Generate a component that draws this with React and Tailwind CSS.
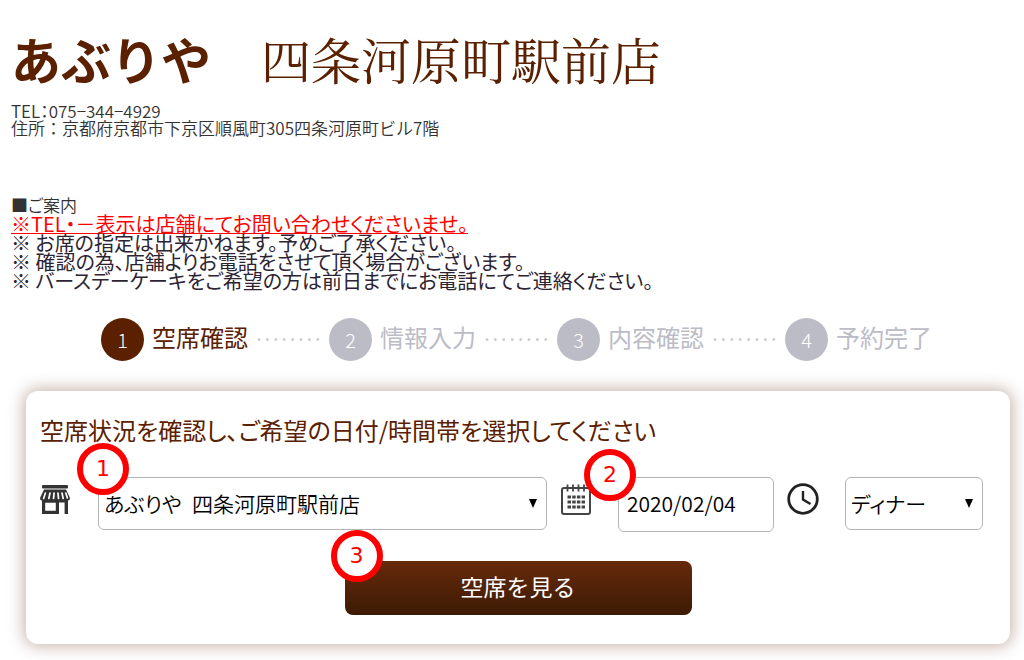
import { useState } from "react";

const notes = [
  "※ お席の指定は出来かねます。予めご了承ください。",
  "※ 確認の為、店舗よりお電話をさせて頂く場合がございます。",
  "※ バースデーケーキをご希望の方は前日までにお電話にてご連絡ください。",
];

const steps = ["空席確認", "情報入力", "内容確認", "予約完了"];

function StoreIcon() {
  return (
    <svg viewBox="0 0 30 30" className="h-[30px] w-[30px]" fill="#333">
      <rect x="2" y="0" width="26" height="3.4" rx="1" />
      <path d="M4 4.600h22L30 13q0 2.500-2 2.500H2Q0 15.500 0 13z" />
      <path
        d="M5.400 8L3.600 13.500M10 8L8.800 13.500M14 8L13.600 13.500M18 8L18.500 13.500M22 8L23.200 13.500M25.800 8L27.400 13"
        fill="none"
        stroke="#fff"
        strokeWidth="1.700"
        strokeLinecap="round"
      />
      <path
        fillRule="evenodd"
        d="M2 15h26v14h-3.400V17.400H19V29H2zM5.200 17.800v8h10.600v-8z"
      />
    </svg>
  );
}

function CalendarIcon() {
  return (
    <svg viewBox="0 0 32 32" className="h-8 w-8" fill="none" stroke="#444">
      <rect x="2" y="5" width="28" height="26" rx="2" strokeWidth="2" />
      <path d="M7.5 1.500v7M13 1.500v7M18.5 1.500v7M24 1.500v7" strokeWidth="1.8" />
      <path
        d="M7.500 14h17.500M7.500 19h17.500M7.500 24h17.500"
        strokeWidth="3"
        strokeDasharray="3.500 1.200"
      />
    </svg>
  );
}

function ClockIcon() {
  return (
    <svg viewBox="0 0 32 32" className="h-8 w-8" fill="none" stroke="#222">
      <circle cx="16" cy="16" r="14.3" strokeWidth="2.8" />
      <path d="M16 8v8.5l7.5 4.5" strokeWidth="2.4" />
    </svg>
  );
}

function Badge({ n, className }) {
  return (
    <span
      className={`absolute z-10 flex h-[52px] w-[52px] items-center justify-center rounded-full border-[6px] border-[#f00] bg-white font-['DejaVu_Sans',sans-serif] text-[22px] leading-none text-[#f00] ${className}`}
    >
      {n}
    </span>
  );
}

function Select({ id, label, options }) {
  return (
    <>
      <select
        id={id}
        aria-label={label}
        className="h-[53px] w-full appearance-none rounded-md border border-[#b4b4b4] bg-white pr-8 pl-[5px] text-[21px] font-[350] text-black [font-feature-settings:'palt']"
      >
        {options.map((o) => (
          <option key={o}>{o}</option>
        ))}
      </select>
      <svg
        viewBox="0 0 8 9"
        className="pointer-events-none absolute top-[22px] right-[10px] h-[9px] w-2"
      >
        <path d="M0 0h8L4 9z" fill="#000" />
      </svg>
    </>
  );
}

export default function App() {
  const [date, setDate] = useState("2020/02/04");

  return (
    <main className="bg-white px-[11px] pt-[26px] pb-4 font-['Noto_Sans_CJK_JP',sans-serif] text-[#333]">
      <h1 className="text-[50px] leading-[64px] whitespace-nowrap text-[#5a2000]">
        <span className="font-bold">あぶりや</span>
        <span className="font-['Noto_Serif_CJK_JP','Noto_Sans_CJK_JP',serif] font-normal">
          {"　四条河原町駅前店"}
        </span>
      </h1>

      <address className="mt-3 text-[17px] leading-[17px] font-[350] not-italic">
        <p className="[font-feature-settings:'palt']">TEL：075−344−4929</p>
        <p>住所：京都府京都市下京区順風町305四条河原町ビル7階</p>
      </address>

      <section className="mt-[60px] text-[20px] leading-[19px] text-[#2c2433] [font-feature-settings:'palt']">
        <h2 className="text-[17px] leading-[18px] font-[350] text-[#333]">■ご案内</h2>
        <p className="text-[#f00] underline decoration-[#f00] decoration-1 [text-decoration-skip-ink:none]">
          ※TEL・－表示は店舗にてお問い合わせくださいませ。
        </p>
        {notes.map((note) => (
          <p key={note}>{note}</p>
        ))}
      </section>

      <ol className="mt-7 mr-[81px] ml-[90px] flex items-center">
        {steps.map((step, i) => (
          <li
            key={step}
            className={`flex items-center ${i < steps.length - 1 ? "flex-1" : ""} ${i === 0 ? "text-[#5a2000]" : "text-[#bcbcc6]"}`}
          >
            <span
              className={`flex h-[43px] w-[43px] shrink-0 items-center justify-center rounded-full text-[20px] font-light text-white ${i === 0 ? "bg-[#5a2000]" : "bg-[#bcbcc6]"}`}
            >
              {i + 1}
            </span>
            <span className="ml-2 pb-1.5 text-[24px] leading-8 whitespace-nowrap">{step}</span>
            {i < steps.length - 1 && (
              <svg className="mx-2 h-[3px] w-0 flex-1" aria-hidden="true">
                <line
                  x1="3"
                  y1="1.5"
                  x2="100%"
                  y2="1.5"
                  stroke="#cdcdd4"
                  strokeWidth="3"
                  strokeLinecap="round"
                  strokeDasharray="0 8.4"
                />
              </svg>
            )}
          </li>
        ))}
      </ol>

      <form
        onSubmit={(e) => e.preventDefault()}
        className="mt-[30px] mr-[3px] ml-[15px] rounded-xl bg-white px-[14px] pt-[23px] pb-[29px] shadow-[0_0_16px_2px_rgba(90,32,0,0.35)]"
      >
        <h2 className="text-[24px] leading-8 text-[#5a2000] [font-feature-settings:'palt']">
          空席状況を確認し、ご希望の日付/時間帯を選択してください
        </h2>

        <div className="mt-[31px] flex items-start">
          <label htmlFor="shop" className="mt-2 w-[58px] shrink-0">
            <StoreIcon />
          </label>
          <div className="relative min-w-0 flex-1">
            <Badge n={1} className="-top-[34px] -left-[21px]" />
            <Select id="shop" label="店舗" options={["あぶりや\u2002四条河原町駅前店"]} />
          </div>

          <label htmlFor="date" className="mt-[6px] ml-[13px] w-[58px] shrink-0">
            <CalendarIcon />
          </label>
          <div className="relative w-[156px] shrink-0">
            <Badge n={2} className="-top-[28px] -left-[34px]" />
            <input
              id="date"
              type="text"
              aria-label="日付"
              value={date}
              onChange={(e) => setDate(e.target.value)}
              className="h-[55px] w-full rounded-md border border-[#b4b4b4] bg-white px-2 pb-1 text-[21px] font-[350] text-black"
            />
          </div>

          <label htmlFor="time" className="mt-[6px] ml-[13px] w-[58px] shrink-0">
            <ClockIcon />
          </label>
          <div className="relative mr-[13px] w-[138px] shrink-0">
            <Select id="time" label="時間帯" options={["ディナー", "ランチ"]} />
          </div>
        </div>

        <div className="relative mx-auto mt-[29px] w-[347px]">
          <Badge n={3} className="-top-[31px] -left-[14px]" />
          <button
            type="submit"
            className="h-[54px] w-full rounded-lg bg-linear-to-b from-[#672a0b] to-[#3d1a05] pb-1 text-[23px] text-white"
          >
            空席を見る
          </button>
        </div>
      </form>
    </main>
  );
}
